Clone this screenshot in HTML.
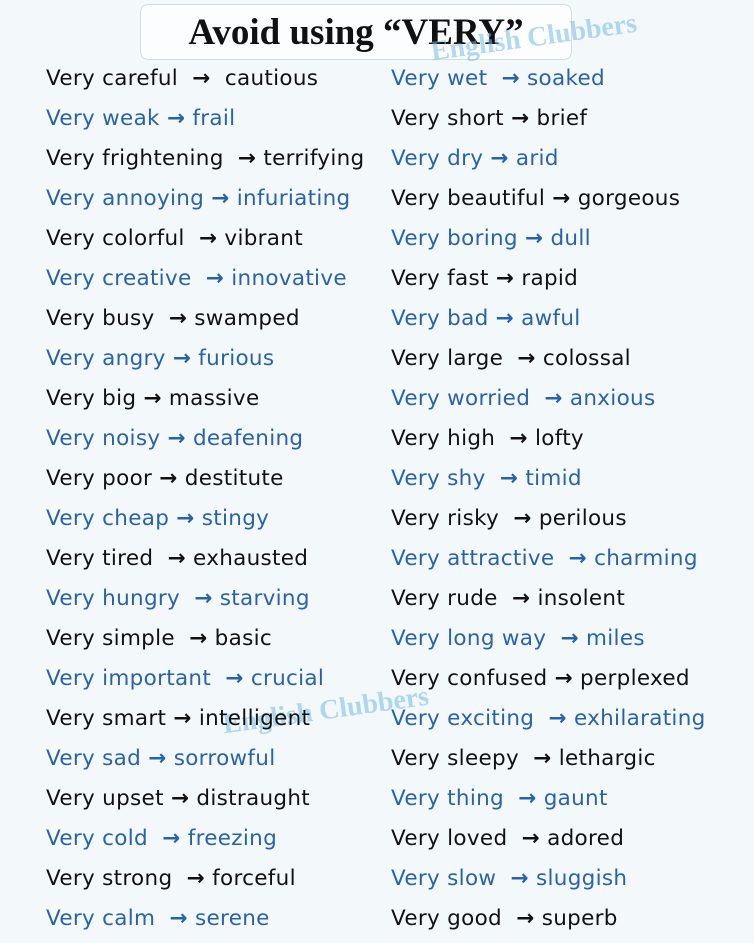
<!DOCTYPE html>
<html><head><meta charset="utf-8"><style>
body{margin:0;width:754px;height:943px;background:#f3f8fb;position:relative;overflow:hidden;font-family:"DejaVu Sans","Liberation Sans",sans-serif;}
.t{position:absolute;left:140px;top:4px;width:430px;height:54px;border:1px solid #d4dde3;border-radius:8px;background:#fbfdfe;text-align:center;font:bold 37px/56px "Liberation Serif",serif;color:#111;}
.r{position:absolute;font-size:21.5px;line-height:28px;white-space:pre;color:#111;letter-spacing:0.3px}
.r b{font-weight:bold}
.b{color:#2a62a8}
.w{position:absolute;font:bold 28px "Liberation Serif",serif;color:rgba(120,185,225,.55);transform:rotate(-8deg);white-space:nowrap}
</style></head><body>
<div class="t">Avoid using “VERY”</div>
<div class="w" style="left:430px;top:22px">English Clubbers</div>
<div class="w" style="left:222px;top:695px">English Clubbers</div>
<div id="c"></div>
<script>
var L=[["Very careful  →  cautious",0],["Very weak → frail",1],["Very frightening  → terrifying",0],["Very annoying → infuriating",1],["Very colorful  → vibrant",0],["Very creative  → innovative",1],["Very busy  → swamped",0],["Very angry → furious",1],["Very big → massive",0],["Very noisy → deafening",1],["Very poor → destitute",0],["Very cheap → stingy",1],["Very tired  → exhausted",0],["Very hungry  → starving",1],["Very simple  → basic",0],["Very important  → crucial",1],["Very smart → intelligent",0],["Very sad → sorrowful",1],["Very upset → distraught",0],["Very cold  → freezing",1],["Very strong  → forceful",0],["Very calm  → serene",1]];
var R=[["Very wet  → soaked",1],["Very short → brief",0],["Very dry → arid",1],["Very beautiful → gorgeous",0],["Very boring → dull",1],["Very fast → rapid",0],["Very bad → awful",1],["Very large  → colossal",0],["Very worried  → anxious",1],["Very high  → lofty",0],["Very shy  → timid",1],["Very risky  → perilous",0],["Very attractive  → charming",1],["Very rude  → insolent",0],["Very long way  → miles",1],["Very confused → perplexed",0],["Very exciting  → exhilarating",1],["Very sleepy  → lethargic",0],["Very thing  → gaunt",1],["Very loved  → adored",0],["Very slow  → sluggish",1],["Very good  → superb",0]];
function f(s){return s.replace("→","<b>→</b>");}
var h="";
for(var i=0;i<22;i++){var y=65+i*40;
h+='<div class="r'+(L[i][1]?' b':'')+'" style="left:46px;top:'+y+'px">'+f(L[i][0])+'</div>';
h+='<div class="r'+(R[i][1]?' b':'')+'" style="left:391px;top:'+y+'px">'+f(R[i][0])+'</div>';}
document.getElementById("c").innerHTML=h;
</script>
</body></html>
